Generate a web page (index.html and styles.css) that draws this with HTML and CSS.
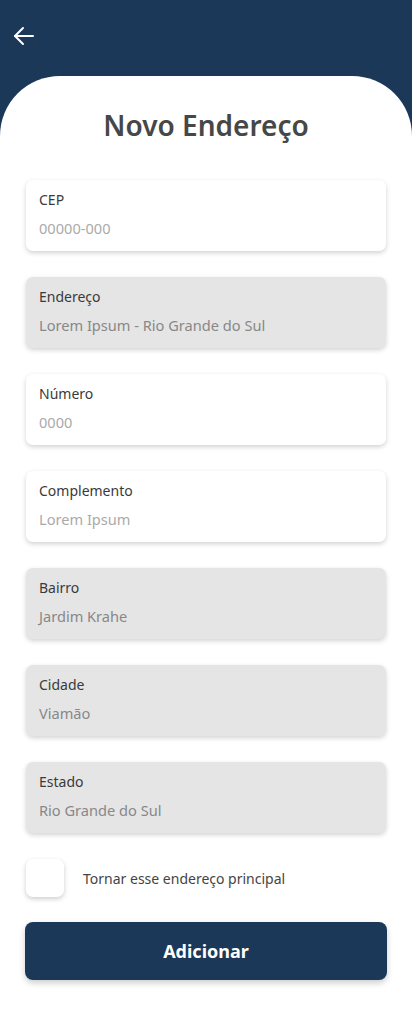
FILE: index.html
```html
<!DOCTYPE html>
<html lang="pt">
<head>
<meta charset="utf-8">
<title>Novo Endereço</title>
<link rel="stylesheet" href="styles.css">
</head>
<body>
<div class="app">
  <header class="topbar">
    <button class="back" aria-label="Voltar">
      <svg width="22" height="22" viewBox="0 0 22 22" fill="none" stroke="#fff" stroke-width="2" stroke-linecap="round" stroke-linejoin="round">
        <path d="M20 11H2"/>
        <path d="M10 3L2 11l8 8"/>
      </svg>
    </button>
  </header>
  <main class="sheet">
    <h1 class="title">Novo Endereço</h1>
    <form class="form">
      <div class="field">
        <span class="label">CEP</span>
        <span class="value placeholder">00000-000</span>
      </div>
      <div class="field disabled">
        <span class="label">Endereço</span>
        <span class="value">Lorem Ipsum - Rio Grande do Sul</span>
      </div>
      <div class="field">
        <span class="label">Número</span>
        <span class="value placeholder">0000</span>
      </div>
      <div class="field">
        <span class="label">Complemento</span>
        <span class="value placeholder">Lorem Ipsum</span>
      </div>
      <div class="field disabled">
        <span class="label">Bairro</span>
        <span class="value">Jardim Krahe</span>
      </div>
      <div class="field disabled">
        <span class="label">Cidade</span>
        <span class="value">Viamão</span>
      </div>
      <div class="field disabled">
        <span class="label">Estado</span>
        <span class="value">Rio Grande do Sul</span>
      </div>
      <label class="check">
        <span class="box"></span>
        <span class="check-text">Tornar esse endereço principal</span>
      </label>
      <button type="button" class="submit">Adicionar</button>
    </form>
  </main>
</div>
</body>
</html>
```

FILE: styles.css
```css
* { box-sizing: border-box; }
html, body { margin: 0; padding: 0; }
body {
  background: #1b3858;
  font-family: "Noto Sans", "Open Sans", sans-serif;
  width: 412px;
  min-height: 1010px;
}
.app {
  display: flex;
  flex-direction: column;
  min-height: 1010px;
}
.topbar {
  height: 76px;
  padding: 24px 0 0 12px;
}
.back {
  background: none;
  border: 0;
  padding: 0;
  width: 24px;
  height: 24px;
  display: flex;
  align-items: center;
  justify-content: center;
  cursor: pointer;
}
.sheet {
  flex: 1;
  background: #fff;
  border-radius: 60px 60px 0 0;
  padding: 30px 25px 30px 25px;
}
.title {
  margin: 0 0 36px 0;
  text-align: center;
  font-size: 28px;
  font-weight: 600;
  color: #474747;
  line-height: 38px;
}
.form {
  display: flex;
  flex-direction: column;
  gap: 26px;
}
.field {
  height: 71px;
  margin: 0 1px 0 1px;
  background: #fff;
  border-radius: 7px;
  box-shadow: 0 2px 5px rgba(0,0,0,0.18);
  padding: 10px 13px 0 13px;
  display: flex;
  flex-direction: column;
  gap: 9px;
}
.field.disabled { background: #e5e5e5; }
.label {
  font-size: 14px;
  line-height: 19px;
  color: #3a3a3a;
}
.value {
  font-size: 14.6px;
  line-height: 21px;
  color: #888;
}
.value.placeholder { color: #aaa; }
.check {
  display: flex;
  align-items: center;
  gap: 19px;
  margin: 0 1px;
}
.box {
  width: 38px;
  height: 38px;
  border-radius: 7px;
  background: #fff;
  box-shadow: 0 2px 5px rgba(0,0,0,0.2);
}
.check-text {
  font-size: 14px;
  color: #444;
}
.submit {
  height: 58px;
  background: #1b3858;
  border: 0;
  border-radius: 8px;
  color: #fff;
  font-family: inherit;
  font-size: 18px;
  font-weight: 700;
  box-shadow: 0 3px 6px rgba(0,0,0,0.2);
  margin-top: -1px;
}
```
